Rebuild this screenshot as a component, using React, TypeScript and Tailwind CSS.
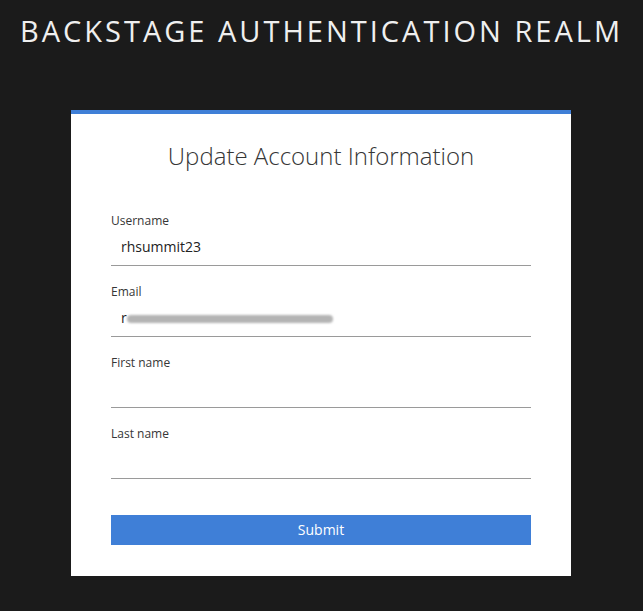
import React from "react";

const fields = [
  { label: "Username", value: "rhsummit23" },
  { label: "Email", value: "email" },
  { label: "First name", value: "" },
  { label: "Last name", value: "" },
];

export default function App() {
  return (
    <div
      className="w-full h-[611px] bg-[#1b1b1b] overflow-hidden"
      style={{ fontFamily: '"Open Sans", "Liberation Sans", sans-serif' }}
    >
      <div className="pt-[11px] text-center">
        <h1 className="text-[29px] leading-[40px] tracking-[3px] text-[#efefef] font-normal whitespace-nowrap">
          BACKSTAGE AUTHENTICATION REALM
        </h1>
      </div>
      <div className="mt-[59px] ml-[71px] w-[500px] bg-white border-t-4 border-[#3f7fd7] px-10 pt-[26px] pb-[31px]">
        <h2 className="text-center text-[24px] leading-[32px] font-light text-[#363636] mb-[41px]">
          Update Account Information
        </h2>
        <div className="flex flex-col">
          {fields.map((f) => (
            <div key={f.label} className="mb-[18px]">
              <div className="text-[12px] leading-[16px] h-[16px] text-[#363636]">{f.label}</div>
              <div className="h-[37px] border-b border-[#9a9a9a] flex items-center pl-[10px] text-[14px] leading-[20px] text-[#222]">
                {f.label === "Email" ? (
                  <div className="flex items-center">
                    <span>r</span>
                    <div className="w-[206px] h-[8px] bg-[#b4b4b4] blur-[1px] rounded-sm mt-[2px]" />
                  </div>
                ) : (
                  <span>{f.value}</span>
                )}
              </div>
            </div>
          ))}
        </div>
        <button className="mt-[18px] w-full h-[30px] bg-[#3f7fd7] text-white text-[14px] leading-[20px] font-medium flex items-center justify-center">
          Submit
        </button>
      </div>
    </div>
  );
}
